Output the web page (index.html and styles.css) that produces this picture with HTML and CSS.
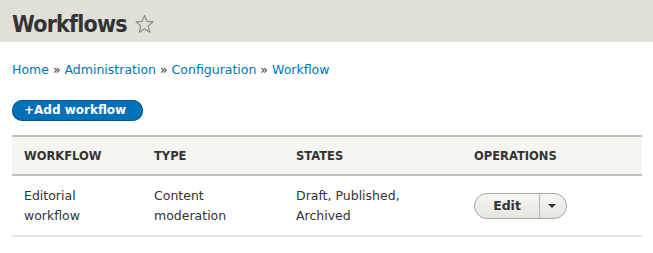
FILE: index.html
```html
<!DOCTYPE html>
<html lang="en">
<head>
    <meta charset="UTF-8">
    <title>Workflows</title>
    <link rel="stylesheet" href="styles.css">
</head>
<body>
    <!-- Page title -->
    <div class="page-header">
        <h1 class="page-title">Workflows</h1>
        <svg class="shortcut" width="19" height="20" viewBox="0 0 19 20">
            <path d="M9.5 1.5 L11.9 7.4 L18 7.9 L13.3 11.9 L14.8 18.2 L9.5 14.8 L4.2 18.2 L5.7 11.9 L1 7.9 L7.1 7.4 Z" fill="none" stroke="#8a8a78" stroke-width="1.1" stroke-linejoin="round"/>
        </svg>
    </div>

    <div class="content">
        <nav class="breadcrumb">
            <a href="#">Home</a> » <a href="#">Administration</a> » <a href="#">Configuration</a> » <a href="#">Workflow</a>
        </nav>

        <a href="#" class="button-action">+Add workflow</a>

        <table class="workflows">
            <thead>
                <tr>
                    <th class="col-name">Workflow</th>
                    <th class="col-type">Type</th>
                    <th class="col-states">States</th>
                    <th>Operations</th>
                </tr>
            </thead>
            <tbody>
                <tr>
                    <td>Editorial<br>workflow</td>
                    <td>Content<br>moderation</td>
                    <td>Draft, Published,<br>Archived</td>
                    <td>
                        <div class="dropbutton">
                            <a href="#" class="dropbutton-main">Edit</a>
                            <span class="dropbutton-toggle"><span class="arrow"></span></span>
                        </div>
                    </td>
                </tr>
            </tbody>
        </table>
    </div>
</body>
</html>
```

FILE: styles.css
```css
body {
    margin: 0;
    padding: 0;
    background: #fff;
    color: #333;
    font-family: "DejaVu Sans", Verdana, sans-serif;
    font-size: 13px;
}
a {
    color: #0074bd;
    text-decoration: none;
}
.page-header {
    background: #e0e0d8;
    height: 36px;
    padding: 6px 12px 0;
    display: flex;
    align-items: center;
    gap: 8px;
}
.page-title {
    margin: 0;
    font-family: "DejaVu Sans Condensed", "DejaVu Sans", sans-serif;
    font-size: 23px;
    font-weight: bold;
    color: #333;
    letter-spacing: -0.8px;
}
.content {
    padding: 20px 11px 0 12px;
}
.breadcrumb {
    font-size: 12.5px;
    line-height: 16px;
    color: #333;
    margin-bottom: 22px;
}
.button-action {
    display: inline-block;
    background: #0071b8;
    color: #fff;
    font-weight: bold;
    font-size: 12px;
    line-height: 21px;
    height: 21px;
    padding: 0 17px 0 12px;
    border-radius: 11px;
    box-shadow: inset 0 0 0 1px #005a95;
}
.workflows {
    width: 100%;
    margin-top: 14px;
    border-collapse: collapse;
}
.workflows th {
    background: #f5f5f2;
    border-top: 2px solid #c2c2bc;
    border-bottom: 2px solid #c2c2bc;
    text-align: left;
    text-transform: uppercase;
    font-size: 11.5px;
    font-weight: bold;
    color: #333;
    height: 37px;
    padding: 0 12px;
}
.workflows td {
    border-bottom: 2px solid #e6e4df;
    padding: 10px 12px 9px;
    font-size: 12.5px;
    line-height: 20px;
    color: #333;
}
.col-name { width: 106px; }
.col-type { width: 118px; }
.col-states { width: 154px; }
.dropbutton {
    display: inline-flex;
    align-items: stretch;
    height: 24px;
    border: 1px solid #a6a6a0;
    border-radius: 13px;
    background: linear-gradient(#f6f6f3, #e6e5df);
    overflow: hidden;
}
.dropbutton-main {
    color: #333;
    font-weight: bold;
    font-size: 12.5px;
    line-height: 24px;
    width: 64px;
    text-align: center;
    border-right: 1px solid #b4b4ae;
}
.dropbutton-toggle {
    width: 26px;
    display: flex;
    align-items: center;
    justify-content: center;
}
.arrow {
    width: 0;
    height: 0;
    border-left: 4px solid transparent;
    border-right: 4px solid transparent;
    border-top: 4px solid #333;
    margin-right: 2px;
}
```
